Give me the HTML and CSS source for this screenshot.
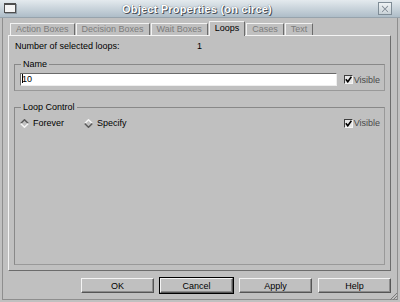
FILE: index.html
```html
<!DOCTYPE html>
<html lang="en">
  <head>
    <meta charset="UTF-8" />
    <title>Object Properties (on circe)</title>
    <link rel="stylesheet" href="styles.css">
  </head>
  <body>
    <div class="window">
      <div class="titlebar">
        <span class="win-icon"></span>
        <span class="title">Object Properties (on circe)</span>
        <span class="close">
          <svg width="8" height="8" viewBox="0 0 8 8">
            <path d="M1 1 L7 7 M7 1 L1 7" stroke="#fff" stroke-width="2.4" />
            <path d="M1 1 L7 7 M7 1 L1 7" stroke="#8a96a0" stroke-width="1.2" />
          </svg>
        </span>
      </div>
      <div class="body">
        <div class="tabs">
          <div class="tab">Action Boxes</div>
          <div class="tab">Decision Boxes</div>
          <div class="tab">Wait Boxes</div>
          <div class="tab active">Loops</div>
          <div class="tab">Cases</div>
          <div class="tab">Text</div>
        </div>
        <div class="panel">
          <div class="count">
            <span>Number of selected loops:</span>
            <span>1</span>
          </div>
          <fieldset class="group">
            <legend>Name</legend>
            <div class="row">
              <div class="entry"><span class="caret"></span>10</div>
              <label class="check">
                <span class="box">
                  <svg width="7" height="7" viewBox="0 0 7 7">
                    <path d="M0.8 3.2 L2.8 5.8 L6.4 0.8" fill="none" stroke="#000" stroke-width="1.6" />
                  </svg>
                </span>
                Visible
              </label>
            </div>
          </fieldset>
          <fieldset class="group loop">
            <legend>Loop Control</legend>
            <div class="row">
              <label class="radio on">
                <svg width="9" height="9" viewBox="0 0 9 9">
                  <path d="M0.7 4.5 L4.5 0.7 L8.3 4.5" fill="none" stroke="#5a5a5a" stroke-width="1.4" />
                  <path d="M0.7 4.5 L4.5 8.3 L8.3 4.5" fill="none" stroke="#f4f4f4" stroke-width="1.4" />
                </svg>
                Forever
              </label>
              <label class="radio">
                <svg width="9" height="9" viewBox="0 0 9 9">
                  <path d="M0.7 4.5 L4.5 0.7 L8.3 4.5" fill="none" stroke="#f4f4f4" stroke-width="1.4" />
                  <path d="M0.7 4.5 L4.5 8.3 L8.3 4.5" fill="none" stroke="#5a5a5a" stroke-width="1.4" />
                </svg>
                Specify
              </label>
              <label class="check push">
                <span class="box">
                  <svg width="7" height="7" viewBox="0 0 7 7">
                    <path d="M0.8 3.2 L2.8 5.8 L6.4 0.8" fill="none" stroke="#000" stroke-width="1.6" />
                  </svg>
                </span>
                Visible
              </label>
            </div>
          </fieldset>
        </div>
        <div class="buttons">
          <button>OK</button>
          <button class="default">Cancel</button>
          <button>Apply</button>
          <button>Help</button>
        </div>
      </div>
      <svg class="grip" width="8" height="8" viewBox="0 0 8 8">
        <path d="M8 1 L1 8 M8 4 L4 8 M8 7 L7 8" stroke="#7a7a7a" stroke-width="1" />
      </svg>
    </div>
  </body>
</html>
```

FILE: styles.css
```css
body {
  margin: 0;
  font-family: "Liberation Sans", Arial, sans-serif;
  font-size: 9px;
  color: #000;
  background: #c0c0c0;
}
.window {
  position: relative;
  width: 400px;
  height: 302px;
  box-sizing: border-box;
  padding: 0 2px 2px;
  display: flex;
  flex-direction: column;
  background: #c0c0c0;
}
.titlebar {
  height: 18px;
  margin: 0 -2px;
  padding: 0 8px 0 4px;
  box-sizing: border-box;
  display: flex;
  align-items: center;
  background: linear-gradient(#e4eaee, #aebdc8);
  border-bottom: 1px solid #97a3ac;
}
.win-icon {
  width: 10px;
  height: 7px;
  margin-top: -1px;
  background: #f4f4f4;
  border: 1px solid #4e4e4e;
  border-top-width: 2px;
  box-shadow: 1px 1px 0 #8c98a2;
}
.title {
  flex: 1;
  text-align: center;
  font-size: 11px;
  font-weight: bold;
  letter-spacing: 0.2px;
  color: #fff;
  text-shadow: 1px 1px 0 #4a5058, 0 0 1px #4a5058;
}
.close {
  width: 12px;
  height: 11px;
  display: flex;
  align-items: center;
  justify-content: center;
  border: 1px solid #7f8c96;
  background: linear-gradient(#eef2f4, #c6d0d6);
}
.body {
  flex: 1;
  display: flex;
  flex-direction: column;
  padding: 3px 6px 6px 5px;
  border: 1px solid #8e8e8e;
  border-top: 0;
}
.tabs {
  display: flex;
  align-items: flex-end;
  gap: 1px;
  height: 14px;
  padding-left: 2px;
}
.tab {
  height: 12px;
  line-height: 11px;
  padding: 0 5px;
  box-sizing: border-box;
  color: #7c7c7c;
  border: 1px solid;
  border-color: #f2f2f2 #6c6c6c transparent #f2f2f2;
  border-bottom: 0;
}
.tab.active {
  position: relative;
  z-index: 1;
  height: 15px;
  line-height: 12px;
  margin-bottom: -1px;
  color: #000;
  background: #c0c0c0;
}
.panel {
  flex: 1;
  display: flex;
  flex-direction: column;
  padding: 0 5px 5px;
  border: 1px solid;
  border-color: #f4f4f4 #6c6c6c #6c6c6c #f4f4f4;
}
.count {
  display: grid;
  grid-template-columns: 182px auto;
  height: 12px;
  line-height: 12px;
  padding: 4px 0 0 1px;
}
.group {
  margin: 7px 0 0;
  padding: 3px 4px 4px 5px;
  border: 1px solid #888;
  border-right-color: #999;
  border-bottom-color: #999;
}
.group legend {
  margin-left: 1px;
  padding: 0 2px;
  line-height: 11px;
}
.loop {
  flex: 1;
  margin-top: 11px;
  padding-top: 4px;
}
.row {
  display: flex;
  align-items: center;
}
.entry {
  flex: 1;
  height: 13px;
  line-height: 11px;
  padding-left: 1px;
  box-sizing: border-box;
  background: #fff;
  border: 1px solid;
  border-color: #6a6a6a #eeeeee #eeeeee #6a6a6a;
}
.caret {
  display: inline-block;
  width: 1px;
  height: 9px;
  margin-right: -1px;
  vertical-align: -1px;
  background: #000;
}
.check {
  display: flex;
  align-items: center;
  gap: 1px;
  margin-left: 7px;
  color: #4a4a4a;
}
.check.push {
  margin-left: auto;
}
.box {
  width: 9px;
  height: 9px;
  box-sizing: border-box;
  display: flex;
  align-items: center;
  justify-content: center;
  background: #e6e6e6;
  border: 1px solid;
  border-color: #3e3e3e #f4f4f4 #f4f4f4 #3e3e3e;
}
.radio {
  display: flex;
  align-items: center;
  gap: 4px;
  height: 12px;
  margin-right: 20px;
}
.buttons {
  display: flex;
  justify-content: flex-end;
  gap: 6px;
  margin-top: 7px;
}
.buttons button {
  width: 73px;
  height: 15px;
  padding: 0;
  font: inherit;
  color: #000;
  background: #c0c0c0;
  border: 1px solid;
  border-color: #f4f4f4 #555 #555 #f4f4f4;
  box-shadow: inset -1px -1px 0 #8c8c8c;
}
.buttons .default {
  outline: 1px solid #000;
}
.grip {
  position: absolute;
  right: 3px;
  bottom: 2px;
}
```
